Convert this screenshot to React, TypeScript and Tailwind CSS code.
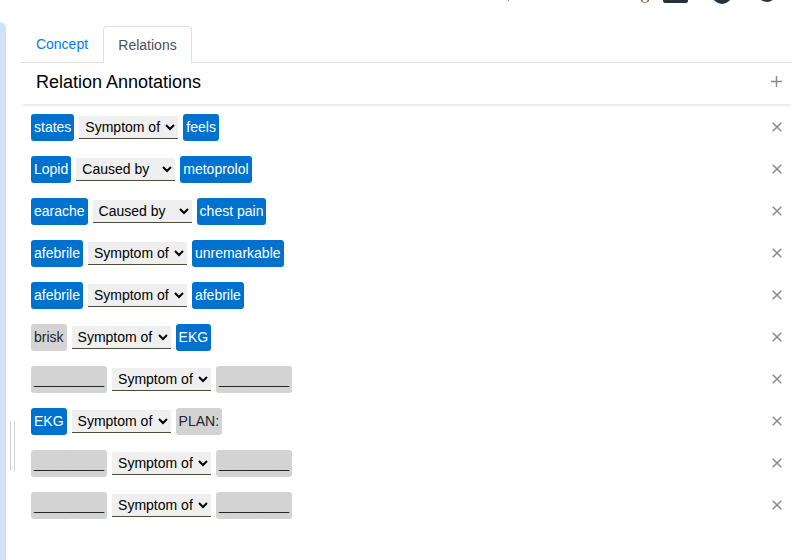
import React from 'react';

type Tag = { text: string; on?: boolean };
type Row = { from: Tag; rel: string; to: Tag };

const blank = '_________';

const rows: Row[] = [
  { from: { text: 'states', on: true }, rel: 'Symptom of', to: { text: 'feels', on: true } },
  { from: { text: 'Lopid', on: true }, rel: 'Caused by', to: { text: 'metoprolol', on: true } },
  { from: { text: 'earache', on: true }, rel: 'Caused by', to: { text: 'chest pain', on: true } },
  { from: { text: 'afebrile', on: true }, rel: 'Symptom of', to: { text: 'unremarkable', on: true } },
  { from: { text: 'afebrile', on: true }, rel: 'Symptom of', to: { text: 'afebrile', on: true } },
  { from: { text: 'brisk' }, rel: 'Symptom of', to: { text: 'EKG', on: true } },
  { from: { text: blank }, rel: 'Symptom of', to: { text: blank } },
  { from: { text: 'EKG', on: true }, rel: 'Symptom of', to: { text: 'PLAN:' } },
  { from: { text: blank }, rel: 'Symptom of', to: { text: blank } },
  { from: { text: blank }, rel: 'Symptom of', to: { text: blank } },
];

const TagChip = ({ tag }: { tag: Tag }) => (
  <span className={`h-[27px] px-[3px] pb-[2px] rounded-[3px] flex items-center text-[14px] leading-none whitespace-nowrap ${tag.on ? 'bg-[#0072ce] text-white' : 'bg-[#d3d3d3] text-[#212529]'}`}>
    {tag.text}
  </span>
);

const App: React.FC = () => {
  return (
    <div className="relative w-[792px] h-[560px] overflow-hidden bg-white flex font-['Liberation_Sans',Arial,sans-serif] text-[#212529]">
      {/* bottoms of the toolbar icons, cut off by the crop */}
      <div className="absolute left-0 top-0 w-full h-[4px] overflow-hidden">
        <div className="absolute left-[508px] top-0 w-px h-[1px] bg-[#888]" />
        <div className="absolute left-[641px] top-[-5px] w-[8px] h-[8px] rounded-full border border-[#2b3a42] border-b-[#d98a2b]" />
        <div className="absolute left-[663px] top-[-8px] w-[25px] h-[11px] rounded-[2px] bg-[#263238]" />
        <div className="absolute left-[712px] top-[-16px] w-[20px] h-[20px] rounded-full bg-[#263238]" />
        <div className="absolute left-[758px] top-[-16px] w-[18px] h-[18px] rounded-full bg-[#263238]" />
      </div>

      {/* left panel edge */}
      <div className="w-[21px] shrink-0 flex flex-col">
        <div className="w-[6px] mt-[22px] flex-1 bg-[#cfe2f6] rounded-tr-[6px]" />
      </div>

      <div className="flex-1 min-w-0 relative">
        {/* resize handle */}
        <div className="absolute left-[-11px] top-[421px] w-[5px] h-[50px] border-x border-[#d4d4d4]" />

        {/* tabs */}
        <div className="h-[63px] pt-[26px] flex border-b border-[#dee2e6]">
          <div className="h-[36px] w-[82px] flex items-center justify-center text-[14px] text-[#007bff]">Concept</div>
          <div className="h-[37px] w-[89px] flex items-center justify-center text-[14px] text-[#495057] bg-white border border-b-0 border-[#dee2e6] rounded-t-[4px]">Relations</div>
        </div>

        {/* header */}
        <div className="h-[41px] pb-[2px] pl-[15px] pr-[10px] flex items-center justify-between shadow-[0_3px_3px_-2px_rgba(0,0,0,0.14)]">
          <span className="text-[18px] text-black">Relation Annotations</span>
          <svg width="11" height="11" viewBox="0 0 11 11" className="mb-[3px] stroke-[#8a8a8a]" strokeWidth="1.5"><path d="M5.5 0V11M0 5.5H11" /></svg>
        </div>

        {/* relation rows */}
        <div className="pt-[10px] pl-[10px] pr-[10px] flex flex-col gap-[15px]">
          {rows.map((row, idx) => (
            <div key={idx} className="h-[27px] flex items-center">
              <TagChip tag={row.from} />
              <select
                defaultValue={row.rel}
                className="h-[23px] ml-[5px] mr-[5px] w-[99px] bg-[#efefef] border-0 border-b border-[#4b5035] text-[14px] text-black pl-[2px] appearance-auto"
              >
                <option>Symptom of</option>
                <option>Caused by</option>
              </select>
              <TagChip tag={row.to} />
              <svg width="10" height="10" viewBox="0 0 10 10" className="ml-auto mb-[1px] stroke-[#8a8a8a]" strokeWidth="1.5"><path d="M0.7 0.7L9.3 9.3M9.3 0.7L0.7 9.3" /></svg>
            </div>
          ))}
        </div>
      </div>
    </div>
  );
};

export default App;
